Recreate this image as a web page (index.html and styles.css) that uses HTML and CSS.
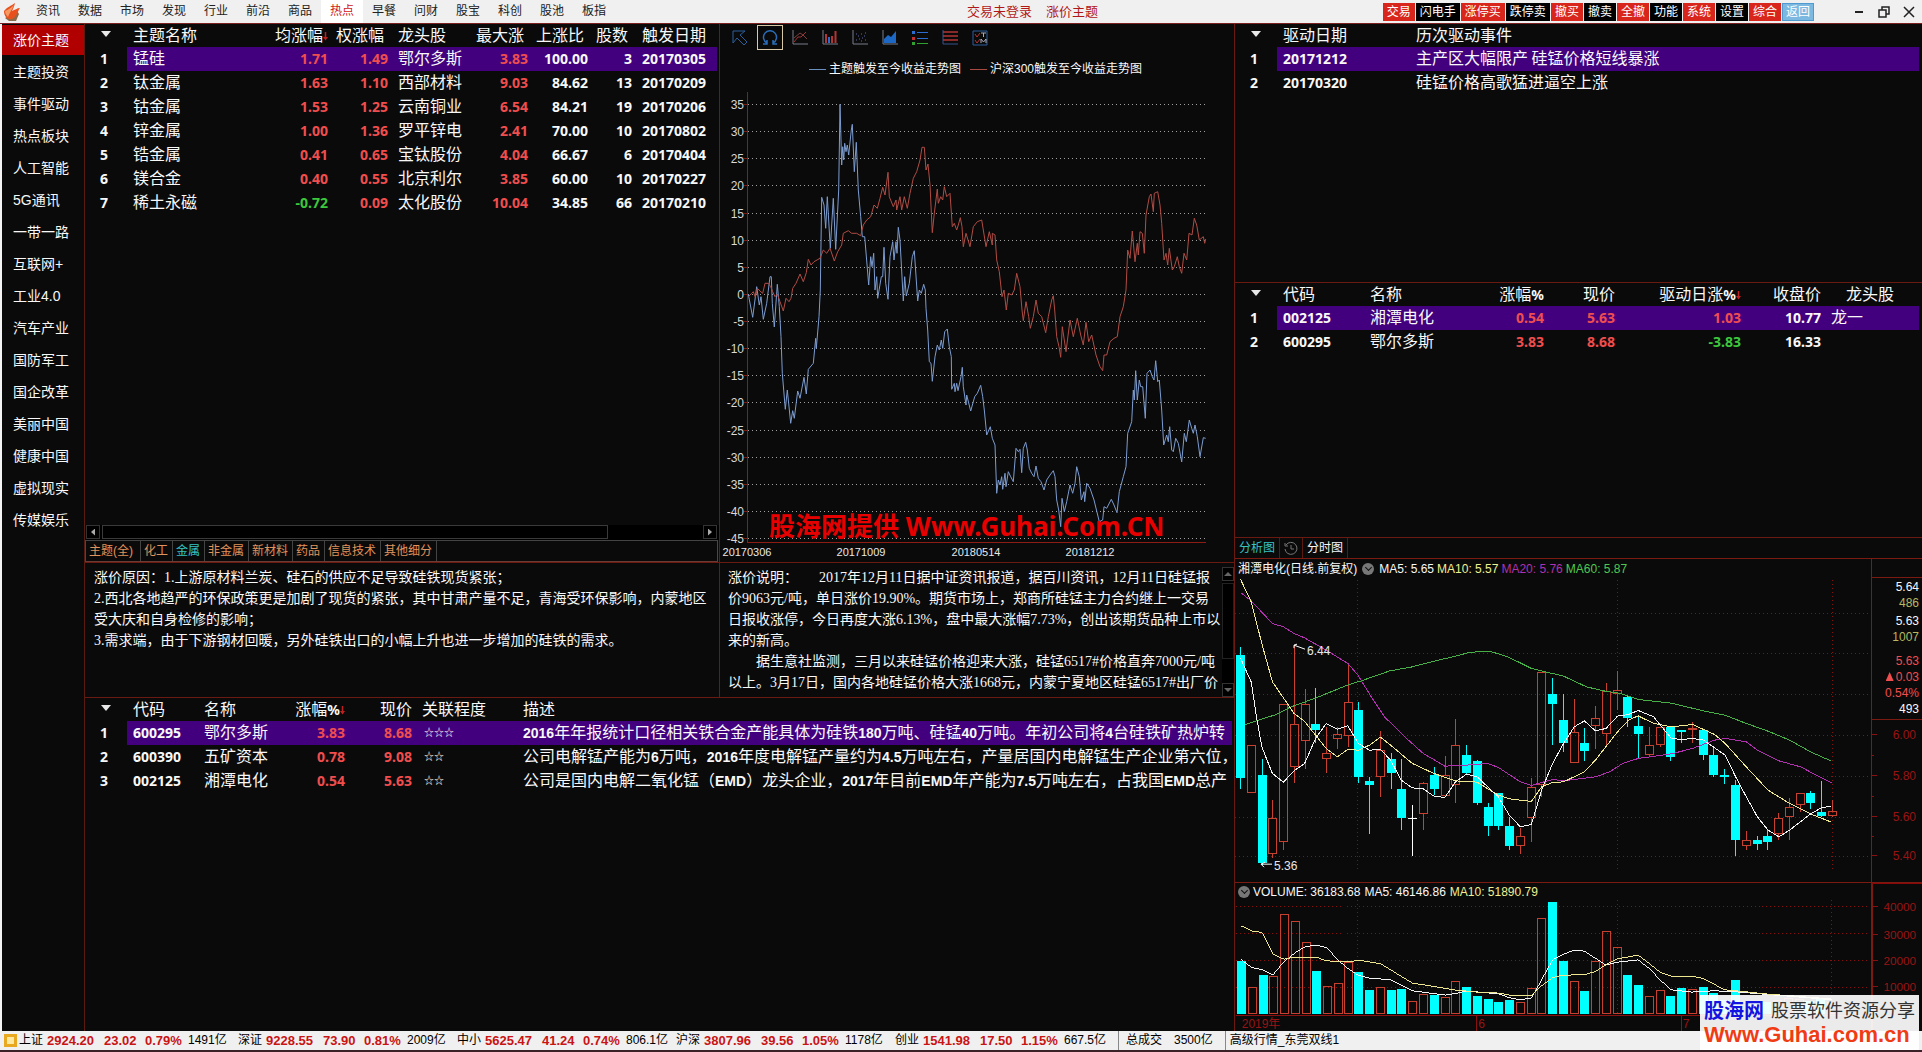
FILE: index.html
```
<!DOCTYPE html>
<html lang="zh-CN">
<head>
<meta charset="utf-8">
<title>涨价主题</title>
<link rel="stylesheet" href="styles.css">
</head>
<body>
<header class="topbar">
  <svg class="logo" viewBox="0 0 18 20" aria-hidden="true">
    <path d="M2 16L6 19H13L16 12L14 9Z" fill="#8a6a48"/>
    <path d="M1 9C4 5 8 4 12 1C11 5 10 7 9 9C12 8 14 6 17 6C14 10 14 15 9 17C4 18 1 14 1 9Z" fill="#e8501e"/>
    <path d="M2 9C5 8 8 6 11 3C9 8 6 11 5 15C3 13 2 11 2 9Z" fill="#f79a62"/>
  </svg>
  <nav class="menu">
    <a href="#">资讯</a><a href="#">数据</a><a href="#">市场</a><a href="#">发现</a><a href="#">行业</a><a href="#">前沿</a><a href="#">商品</a><a href="#" class="current">热点</a><a href="#">早餐</a><a href="#">问财</a><a href="#">股宝</a><a href="#">科创</a><a href="#">股池</a><a href="#">板指</a>
  </nav>
  <div class="session"><span>交易未登录</span><span>涨价主题</span></div>
  <div class="actions">
    <button class="red">交易</button><button>闪电手</button><button class="red">涨停买</button><button>跌停卖</button><button class="red">撤买</button><button>撤卖</button><button class="red">全撤</button><button>功能</button><button class="red">系统</button><button>设置</button><button class="red">综合</button><button class="back">返回</button>
  </div>
  <div class="window-controls">
    <button aria-label="最小化"><svg viewBox="0 0 12 12"><path d="M2 6H10" stroke-width="2"/></svg></button>
    <button aria-label="还原"><svg viewBox="0 0 12 12"><path d="M4 4V1H11V8H8M1 4H8V11H1Z" stroke-width="1.5"/></svg></button>
    <button aria-label="关闭"><svg viewBox="0 0 12 12"><path d="M1 1L11 11M11 1L1 11" stroke-width="1.5"/></svg></button>
  </div>
</header>

<main class="workspace">
  <nav class="sidebar">
    <a href="#" class="current">涨价主题</a><a href="#">主题投资</a><a href="#">事件驱动</a><a href="#">热点板块</a><a href="#">人工智能</a><a href="#">5G通讯</a><a href="#">一带一路</a><a href="#">互联网+</a><a href="#">工业4.0</a><a href="#">汽车产业</a><a href="#">国防军工</a><a href="#">国企改革</a><a href="#">美丽中国</a><a href="#">健康中国</a><a href="#">虚拟现实</a><a href="#">传媒娱乐</a>
  </nav>

  <section class="panel themes">
    <div class="table-area">
      <table class="grid-table">
        <colgroup><col class="w42"><col><col class="w64"><col class="w60"><col class="w80"><col class="w60"><col class="w60"><col class="w44"><col class="w85"></colgroup>
        <thead><tr><th><i class="sort"></i></th><th class="l">主题名称</th><th>均涨幅<i class="down"></i></th><th class="pr">权涨幅</th><th class="l pl">龙头股</th><th class="pr">最大涨</th><th class="pr">上涨比</th><th class="pr">股数</th><th class="l pl">触发日期</th></tr></thead>
        <tbody>
          <tr class="selected"><td>1</td><td class="l">锰硅</td><td class="up">1.71</td><td class="up">1.49</td><td class="l pl">鄂尔多斯</td><td class="up">3.83</td><td>100.00</td><td>3</td><td class="l pl">20170305</td></tr>
          <tr><td>2</td><td class="l">钛金属</td><td class="up">1.63</td><td class="up">1.10</td><td class="l pl">西部材料</td><td class="up">9.03</td><td>84.62</td><td>13</td><td class="l pl">20170209</td></tr>
          <tr><td>3</td><td class="l">钴金属</td><td class="up">1.53</td><td class="up">1.25</td><td class="l pl">云南铜业</td><td class="up">6.54</td><td>84.21</td><td>19</td><td class="l pl">20170206</td></tr>
          <tr><td>4</td><td class="l">锌金属</td><td class="up">1.00</td><td class="up">1.36</td><td class="l pl">罗平锌电</td><td class="up">2.41</td><td>70.00</td><td>10</td><td class="l pl">20170802</td></tr>
          <tr><td>5</td><td class="l">锆金属</td><td class="up">0.41</td><td class="up">0.65</td><td class="l pl">宝钛股份</td><td class="up">4.04</td><td>66.67</td><td>6</td><td class="l pl">20170404</td></tr>
          <tr><td>6</td><td class="l">镁合金</td><td class="up">0.40</td><td class="up">0.55</td><td class="l pl">北京利尔</td><td class="up">3.85</td><td>60.00</td><td>10</td><td class="l pl">20170227</td></tr>
          <tr><td>7</td><td class="l">稀土永磁</td><td class="dn">-0.72</td><td class="up">0.09</td><td class="l pl">太化股份</td><td class="up">10.04</td><td>34.85</td><td>66</td><td class="l pl">20170210</td></tr>
        </tbody>
      </table>
    </div>
    <div class="hscroll"><button class="arrow left" aria-label="向左"></button><div class="htrack"><div class="hthumb"></div></div><button class="arrow right" aria-label="向右"></button></div>
    <nav class="tabs"><a href="#">主题(全)</a><a href="#">化工</a><a href="#" class="current">金属</a><a href="#">非金属</a><a href="#">新材料</a><a href="#">药品</a><a href="#">信息技术</a><a href="#">其他细分</a></nav>
  </section>

  <section class="panel trend">
    <div class="chart-tools">
      <button aria-label="指针"><svg viewBox="0 0 16 16"><path d="M1 1H13L8 5L15 12L12 15L5 8L1 13Z" stroke="#2c5f9c"/></svg></button>
      <button class="current" aria-label="刷新"><svg viewBox="0 0 16 16"><path d="M5 13A6.500 6.500 0 1 1 11 13M1 14H5V10M15 14H11V10" stroke="#2a6cb8" stroke-width="1.500"/></svg></button>
      <button aria-label="折线图"><svg viewBox="0 0 16 16"><path d="M1 0V14H16" stroke="#777c88"/><path d="M2 12L6 7H9L14 2" stroke="#a03434"/><path d="M2 8L8 3L11 5L15 9" stroke="#7a4040"/></svg></button>
      <button aria-label="柱状图"><svg viewBox="0 0 16 16"><path d="M1 0V14H16" stroke="#777c88"/><path d="M4 4V13M10 6V13" stroke="#b23434" stroke-width="2"/><path d="M7 7V13" stroke="#2a6cd0" stroke-width="2"/><path d="M13.500 1V13" stroke="#b23434" stroke-width="2"/></svg></button>
      <button aria-label="散点图"><svg viewBox="0 0 16 16"><path d="M1 0V14H16" stroke="#777c88"/><path d="M4 10h1M6 6h1M7 9h1M9 4h1M10 8h1M12 6h1M13 10h1M9 11h1M4 4h1M13 3h1" stroke="#5a68a8"/></svg></button>
      <button aria-label="面积图"><svg viewBox="0 0 16 16"><path d="M2 13V9L6 5L9 7L14 1V13Z" fill="#1c68c4"/><path d="M1 0V14H16" stroke="#777c88"/></svg></button>
      <button aria-label="图例"><svg viewBox="0 0 16 16"><path d="M0 2.500H3" stroke="#2a6cd0" stroke-width="3"/><path d="M5 2.500H16" stroke="#2a6cd0"/><path d="M0 8.500H3" stroke="#c03030" stroke-width="3"/><path d="M5 8.500H16" stroke="#2a6cd0"/><path d="M0 13.500H3" stroke="#30a030" stroke-width="3"/><path d="M5 13.500H16" stroke="#30a030"/></svg></button>
      <button aria-label="网格线"><svg viewBox="0 0 16 16"><path d="M1 0V14H16" stroke="#35558c"/><path d="M1 2H16M1 6H16M1 10H16" stroke="#b23434" stroke-width="1.500"/></svg></button>
      <button aria-label="标题设置"><svg viewBox="0 0 16 16"><path d="M1 1H15V15H1Z" stroke="#2c5f9c"/><path d="M3 4L5 7L8 3M3 10L5 13L8 9" stroke="#b23434"/><path d="M9 3H14M11.500 3V7M9 13V9L11.500 12L14 9V13" stroke="#aab"/></svg></button>
    </div>
    <div class="legend"><span class="key theme"></span><span>主题触发至今收益走势图</span><span class="key index"></span><span>沪深300触发至今收益走势图</span></div>
    <svg class="plot" id="trend" viewBox="0 0 514 484"></svg>
  </section>

  <section class="panel reason">
    <p>涨价原因：1.上游原材料兰炭、硅石的供应不足导致硅铁现货紧张；<br>2.西北各地趋严的环保政策更是加剧了现货的紧张，其中甘肃产量不足，青海受环保影响，内蒙地区<br>受大庆和自身检修的影响；<br>3.需求端，由于下游钢材回暖，另外硅铁出口的小幅上升也进一步增加的硅铁的需求。</p>
  </section>

  <section class="panel notes">
    <p>涨价说明：　　2017年12月11日据中证资讯报道，据百川资讯，12月11日硅锰报<br>价9063元/吨，单日涨价19.90%。期货市场上，郑商所硅锰主力合约继上一交易<br>日报收涨停，今日再度大涨6.13%，盘中最大涨幅7.73%，创出该期货品种上市以<br>来的新高。<br>　　据生意社监测，三月以来硅锰价格迎来大涨，硅锰6517#价格直奔7000元/吨<br>以上。3月17日，国内各地硅锰价格大涨1668元，内蒙宁夏地区硅锰6517#出厂价</p>
    <div class="vscroll"><button class="arrow upward" aria-label="向上"></button><div class="vtrack"><div class="vthumb"></div></div><button class="arrow downward" aria-label="向下"></button></div>
  </section>

  <section class="panel stocks">
    <table class="grid-table">
      <colgroup><col class="w42"><col class="w71"><col class="w80"><col class="w67"><col class="w67"><col class="w105"><col></colgroup>
      <thead><tr><th><i class="sort"></i></th><th class="l">代码</th><th class="l">名称</th><th>涨幅<b>%</b><i class="down"></i></th><th>现价</th><th class="l pl">关联程度</th><th class="l">描述</th></tr></thead>
      <tbody>
        <tr class="selected"><td>1</td><td class="l">600295</td><td class="l">鄂尔多斯</td><td class="up">3.83</td><td class="up">8.68</td><td class="l pl stars">☆☆☆</td><td class="l desc">2016年年报统计口径相关铁合金产能具体为硅铁180万吨、硅锰40万吨。年初公司将4台硅铁矿热炉转</td></tr>
        <tr><td>2</td><td class="l">600390</td><td class="l">五矿资本</td><td class="up">0.78</td><td class="up">9.08</td><td class="l pl stars">☆☆</td><td class="l desc">公司电解锰产能为6万吨，2016年度电解锰产量约为4.5万吨左右，产量居国内电解锰生产企业第六位，</td></tr>
        <tr><td>3</td><td class="l">002125</td><td class="l">湘潭电化</td><td class="up">0.54</td><td class="up">5.63</td><td class="l pl stars">☆☆</td><td class="l desc">公司是国内电解二氧化锰（EMD）龙头企业，2017年目前EMD年产能为7.5万吨左右，占我国EMD总产</td></tr>
      </tbody>
    </table>
  </section>

  <div class="rightside">
    <section class="events">
      <table class="grid-table">
        <colgroup><col class="w42"><col class="w133"><col></colgroup>
        <thead><tr><th><i class="sort"></i></th><th class="l">驱动日期</th><th class="l">历次驱动事件</th></tr></thead>
        <tbody>
          <tr class="selected"><td>1</td><td class="l">20171212</td><td class="l">主产区大幅限产 硅锰价格短线暴涨</td></tr>
          <tr><td>2</td><td class="l">20170320</td><td class="l">硅锰价格高歌猛进逼空上涨</td></tr>
        </tbody>
      </table>
    </section>
    <section class="drivers">
      <table class="grid-table">
        <colgroup><col class="w42"><col class="w87"><col><col class="w80"><col class="w71"><col class="w126"><col class="w80"><col class="w98"></colgroup>
        <thead><tr><th><i class="sort"></i></th><th class="l">代码</th><th class="l">名称</th><th>涨幅<b>%</b></th><th>现价</th><th>驱动日涨<b>%</b><i class="down"></i></th><th>收盘价</th><th class="c">龙头股</th></tr></thead>
        <tbody>
          <tr class="selected"><td>1</td><td class="l">002125</td><td class="l">湘潭电化</td><td class="up">0.54</td><td class="up">5.63</td><td class="up">1.03</td><td>10.77</td><td class="l pl">龙一</td></tr>
          <tr><td>2</td><td class="l">600295</td><td class="l">鄂尔多斯</td><td class="up">3.83</td><td class="up">8.68</td><td class="dn">-3.83</td><td>16.33</td><td></td></tr>
        </tbody>
      </table>
    </section>
    <section class="quote">
      <nav class="quote-tabs">
        <a href="#" class="current">分析图</a>
        <a href="#" class="clock" aria-label="历史"><svg viewBox="0 0 14 14"><path d="M2 4A6 6 0 1 1 1 8M1 2V5H4M7 4V8H10" fill="none" stroke="#777"/></svg></a>
        <a href="#">分时图</a>
      </nav>
      <div class="price-row">
        <div class="chart-body">
          <div class="info"><span class="name">湘潭电化(日线.前复权)</span><i class="chev"></i><span>MA5: 5.65</span><span class="ma10">MA10: 5.57</span><span class="ma20">MA20: 5.76</span><span class="ma60">MA60: 5.87</span></div>
          <svg class="plot" id="candles" viewBox="0 0 636 304"></svg>
        </div>
        <aside class="side">
          <div class="ticks">
            <div>5.64</div><div class="vol">486</div>
            <div class="gap2">5.63</div><div class="vol">1007</div>
            <div class="gap8 up">5.63</div><div class="up"><i class="tri"></i>0.03</div><div class="up">0.54%</div><div>493</div>
          </div>
          <svg class="plot" id="price-axis" viewBox="0 0 50 162"></svg>
        </aside>
      </div>
      <div class="volume-row">
        <div class="chart-body">
          <div class="info vol-info"><i class="chev"></i><span>VOLUME: 36183.68</span><span>MA5: 46146.86</span><span class="ma10">MA10: 51890.79</span></div>
          <svg class="plot" id="volume" viewBox="0 0 636 131"></svg>
        </div>
        <aside class="side strong"><svg class="plot" id="volume-axis" viewBox="0 0 50 148"></svg></aside>
      </div>
    </section>
  </div>
</main>

<footer class="statusbar">
  <i class="app-icon"></i>
  <div class="index"><span>上证</span><b>2924.20</b><b>23.02</b><b>0.79%</b><span>1491亿</span></div>
  <div class="index"><span>深证</span><b>9228.55</b><b>73.90</b><b>0.81%</b><span>2009亿</span></div>
  <div class="index"><span>中小</span><b>5625.47</b><b>41.24</b><b>0.74%</b><span>806.1亿</span></div>
  <div class="index"><span>沪深</span><b>3807.96</b><b>39.56</b><b>1.05%</b><span>1178亿</span></div>
  <div class="index"><span>创业</span><b>1541.98</b><b>17.50</b><b>1.15%</b><span>667.5亿</span></div>
  <div class="total"><span>总成交</span><span>3500亿</span></div>
  <div class="server">高级行情_东莞双线1</div>
</footer>
<div class="site-mark"><span class="brand">股海网</span><span class="slogan">股票软件资源分享</span><span class="url">Www.Guhai.com.cn</span></div>
<script src="app.js"></script>
</body>
</html>
```
FILE: styles.css
```
* { box-sizing: border-box; }
html, body { margin: 0; }
body {
  min-height: 100vh;
  display: flex;
  flex-direction: column;
  position: relative;
  background: #0a0a0a;
  color: #f8f8f8;
  font: 14px/20px "Liberation Sans", "Noto Sans CJK SC", sans-serif;
  border-bottom: 2px solid #3a2228;
}
a { color: inherit; text-decoration: none; }
button { margin: 0; padding: 0; border: 0; background: none; color: inherit; font: inherit; }
p { margin: 0; }
i { font-style: normal; }

/* top bar */
.topbar {
  flex: none;
  height: 24px;
  display: flex;
  align-items: center;
  background: #f0f0f0;
  border-bottom: 1px solid #7a2020;
  color: #222;
  font-size: 12px;
  position: relative;
}
.logo { width: 18px; height: 20px; margin: 0 6px 0 3px; }
.menu { display: flex; align-self: stretch; }
.menu a { width: 42px; text-align: center; line-height: 23px; }
.menu .current { background: #fff; color: #d01818; }
.session {
  position: absolute;
  left: 50%;
  margin-left: 6px;
  display: flex;
  gap: 14px;
  color: #b01818;
  font-size: 13px;
}
.actions { margin-left: auto; display: flex; gap: 1px; }
.actions button {
  height: 18px;
  padding: 0 4px;
  background: #000;
  color: #fff;
  line-height: 18px;
}
.actions .red { background: #d9261c; }
.actions .back { background: #7db8e0; box-shadow: inset 0 0 0 1px #4f9bd0; }
.window-controls { display: flex; gap: 13px; margin: 0 7px 0 39px; }
.window-controls svg { display: block; width: 12px; height: 12px; fill: none; stroke: #222; }

/* workspace */
.workspace {
  flex: 1;
  display: grid;
  grid-template-columns: 83px minmax(0, 635fr) minmax(0, 515fr) minmax(0, 687fr);
  grid-template-rows: minmax(0, 539fr) minmax(0, 135fr) minmax(0, 333fr);
  border-left: 2px solid #f4f4f4;
}
.sidebar {
  grid-row: 1 / 4;
  display: flex;
  flex-direction: column;
  gap: 2px;
  padding-top: 1px;
  border-right: 1px solid #5a1a10;
}
.sidebar a { height: 30px; padding-left: 11px; line-height: 30px; }
.sidebar .current { background: #b00000; }
.panel { border-right: 1px solid #6a1a10; border-bottom: 1px solid #6a1a10; }
.themes { display: flex; flex-direction: column; }
.table-area { flex: 1; }

/* data tables */
.grid-table {
  width: calc(100% - 2px);
  table-layout: fixed;
  border-collapse: collapse;
  font: 16px/19px "Noto Sans CJK SC", sans-serif;
}
.grid-table tr { height: 24px; }
.grid-table thead tr { height: 23px; }
.grid-table th, .grid-table td {
  height: inherit;
  padding: 0 0 3px;
  font-weight: normal;
  text-align: right;
  vertical-align: middle;
  white-space: nowrap;
}
.grid-table th b { font: bold 14px/14px "Noto Sans", sans-serif; }
.grid-table td:first-child { text-align: center; padding-right: 4px; }
.grid-table .l { text-align: left; padding-left: 6px; }
.grid-table .pl { padding-left: 10px; }
.grid-table .pr { padding-right: 4px; }
.grid-table .c { text-align: center; }
.grid-table .selected td:not(:first-child) { background: #42007e; }
.grid-table .stars { font-size: 10px; padding-left: 12px; }
.num { font: bold 14px/14px "Noto Sans", sans-serif; }
.desc .num { font-family: "Liberation Sans", sans-serif; }
.up { color: #f04e4e; }
.dn { color: #3cc83c; }
.w42 { width: 42px; } .w44 { width: 44px; } .w60 { width: 60px; } .w64 { width: 64px; }
.w67 { width: 67px; } .w71 { width: 71px; } .w80 { width: 80px; } .w85 { width: 85px; }
.w87 { width: 87px; } .w98 { width: 98px; } .w105 { width: 105px; } .w126 { width: 126px; } .w133 { width: 133px; }
.sort {
  display: block;
  width: 10px;
  height: 6px;
  margin: 0 auto;
  background: #e8e8e8;
  clip-path: polygon(0 0, 100% 0, 50% 100%);
}
.down {
  display: inline-block;
  width: 5px;
  height: 9px;
  background: #c02020;
  clip-path: polygon(35% 0, 65% 0, 65% 60%, 100% 60%, 50% 100%, 0 60%, 35% 60%);
}

/* scroll bars */
.hscroll { display: flex; gap: 2px; height: 15px; padding: 0 2px 0 1px; background: #000; }
.vscroll { display: flex; flex-direction: column; gap: 2px; width: 12px; background: #000; }
.arrow { flex: none; width: 14px; height: 14px; border: 1px solid #333; display: grid; place-items: center; }
.vscroll .arrow { width: 12px; }
.arrow::after { content: ""; width: 4px; height: 7px; background: #aaa; }
.left::after { clip-path: polygon(100% 0, 100% 100%, 0 50%); }
.right::after { clip-path: polygon(0 0, 100% 50%, 0 100%); }
.upward::after, .downward::after { width: 8px; height: 4px; background: #666; }
.upward::after { clip-path: polygon(50% 0, 100% 100%, 0 100%); }
.downward::after { clip-path: polygon(0 0, 100% 0, 50% 100%); }
.htrack, .vtrack { flex: 1; }
.hthumb { width: 84.5%; height: 14px; border: 1px solid #3a3a3a; }
.vthumb { height: 76px; border: 1px solid #222; }

/* theme tabs */
.tabs {
  display: flex;
  height: 22px;
  margin-right: 1px;
  border: 1px solid #6a3a34;
  border-top-color: #444;
  color: #e0935c;
  font-size: 12px;
  line-height: 20px;
}
.tabs a { padding: 0 4px 0 3px; border-right: 1px solid #444; }
.tabs a:first-child { width: 55px; }
.tabs .current { color: #35c4c4; }

/* yield comparison chart */
.trend { display: flex; flex-direction: column; }
.chart-tools { display: flex; gap: 4px; height: 27px; padding: 1px 0 0 7px; }
.chart-tools button { width: 26px; height: 25px; display: grid; place-items: center; }
.chart-tools .current { border: 1px solid #d8c8a8; }
.chart-tools svg { width: 16px; height: 16px; fill: none; }
.legend {
  display: flex;
  align-items: center;
  height: 27px;
  padding: 9px 0 0 89px;
  font-size: 12px;
}
.key { width: 17px; height: 1px; margin-right: 3px; background: #6a90c0; }
.key.index { margin-left: 9px; background: #a84a40; }
.plot { flex: 1; min-height: 0; width: 100%; display: block; }
svg text { font-size: 12px; }
svg .mark { font: bold 26px "Noto Sans", "Noto Sans CJK SC", sans-serif; fill: #e80000; }

/* text panels */
.reason, .notes { font: 14px/21px "Liberation Serif", "Noto Sans CJK SC", serif; white-space: nowrap; }
.reason { padding: 4px 0 0 9px; }
.notes { display: flex; justify-content: space-between; padding: 4px 0 0 8px; }
.notes p { min-width: 0; }
.stocks { grid-column: 2 / 4; border-bottom: 0; }

/* right side */
.rightside {
  grid-column: 4;
  grid-row: 1 / 4;
  display: grid;
  grid-template-rows: minmax(0, 259fr) minmax(0, 255fr) minmax(0, 493fr);
}
.events, .drivers { border-bottom: 1px solid #6a1a10; }
.events .grid-table, .drivers .grid-table { width: calc(100% - 3px); }
.quote { display: flex; flex-direction: column; font-size: 12px; line-height: 16px; }
.quote-tabs { display: flex; height: 21px; border-bottom: 1px solid #7a1a10; line-height: 20px; }
.quote-tabs a { padding: 0 4px; border-right: 1px solid #5a1a10; }
.quote-tabs .current { color: #35c4c4; }
.clock { display: grid; place-items: center; }
.clock svg { width: 14px; height: 14px; }
.price-row, .volume-row { display: grid; grid-template-columns: minmax(0, 1fr) 51px; min-height: 0; }
.price-row { flex: 324; border-bottom: 1px solid #7a1a10; }
.volume-row { flex: 148; }
.chart-body, .side { display: flex; flex-direction: column; min-height: 0; }
.side { border-left: 1px solid #7a1a10; }
.side.strong { border-left-width: 2px; border-top: 1px solid #8c0808; }
.info { display: flex; align-items: center; gap: 3px; height: 19px; padding-left: 3px; white-space: nowrap; }
.vol-info { height: 17px; gap: 4px; }
.chev { width: 12px; height: 12px; margin: 0 2px; border-radius: 50%; background: #777; display: grid; place-items: center; }
.vol-info .chev { margin: 0 -1px 0 0; }
.chev::after { content: ""; width: 4px; height: 4px; margin-top: -2px; border: solid #111; border-width: 0 1px 1px 0; transform: rotate(45deg); }
.ma10 { color: #f0f090; }
.ma20 { color: #b030b0; }
.ma60 { color: #50c850; }
.ticks {
  flex: none;
  margin-top: 18px;
  padding: 1px 3px 2px 0;
  border-top: 1px solid #7a1a10;
  border-bottom: 1px solid #7a1a10;
  text-align: right;
}
.vol { color: #b8b860; }
.gap2 { margin-top: 2px; }
.gap8 { margin-top: 8px; }
.tri { display: inline-block; width: 8px; height: 9px; margin-right: 2px; background: #f04e4e; clip-path: polygon(50% 0, 100% 100%, 0 100%); }

/* status bar */
.statusbar {
  flex: none;
  display: flex;
  align-items: center;
  height: 19px;
  padding-left: 4px;
  background: #f0f0f0;
  color: #000;
  font-size: 12px;
  line-height: 19px;
  white-space: nowrap;
}
.app-icon { width: 13px; height: 13px; margin-right: 2px; background: #ffe9a0; border: 3px solid #e8a820; }
.index { display: grid; grid-template-columns: 28px 57px 41px 43px 51px; }
.index:nth-of-type(n) { grid-template-columns: 28px 57px 41px 43px 50px; }
.index b { color: #c81414; font-size: 13px; }
.total { display: flex; gap: 12px; margin-left: 4px; padding: 0 12px 0 7px; border-left: 1px solid #888; }
.server { padding-left: 4px; border-left: 1px solid #888; }

/* site mark, floats over the page corner */
.site-mark {
  position: absolute;
  right: 3px;
  bottom: -2px;
  width: 219px;
  height: 57px;
  padding: 3px 4px 2px;
  display: grid;
  grid-template-columns: 63px 1fr;
  grid-template-rows: 26px 24px;
  background: rgba(255, 255, 255, 0.92);
  white-space: nowrap;
  line-height: 26px;
}
.brand { color: #1414e0; font-weight: bold; font-size: 20px; }
.slogan { padding-left: 4px; color: #333; font-size: 18px; }
.url { grid-column: 1 / 3; color: #f03c14; font-weight: bold; font-size: 22px; line-height: 22px; }
```
FILE: app.js
```
(function () {
  var NS = 'http://www.w3.org/2000/svg';

  function add(svg, name, attrs, text) {
    var el = document.createElementNS(NS, name);
    for (var k in attrs) el.setAttribute(k, attrs[k]);
    if (text) el.textContent = text;
    svg.appendChild(el);
    return el;
  }
  function line(svg, x1, y1, x2, y2, color, dash) {
    var a = { x1: x1, y1: y1, x2: x2, y2: y2, stroke: color, 'shape-rendering': 'crispEdges' };
    if (dash) a['stroke-dasharray'] = dash;
    add(svg, 'line', a);
  }
  function curve(svg, data, fx, fy, color, crisp) {
    var pts = data.split(' ').map(function (p) {
      var v = p.split(',');
      return fx(+v[0]).toFixed(1) + ',' + fy(+v[1]).toFixed(1);
    });
    var a = { points: pts.join(' '), fill: 'none', stroke: color };
    if (crisp) a['shape-rendering'] = 'crispEdges';
    add(svg, 'polyline', a);
  }
  function label(svg, x, y, text, color, anchor) {
    add(svg, 'text', { x: x, y: y, fill: color, 'text-anchor': anchor || 'start' }, text);
  }

  /* bold numerals inside table cells */
  document.querySelectorAll('.grid-table td').forEach(function (td) {
    td.innerHTML = td.textContent.replace(/[-0-9.A-Z]+/g, '<span class="num">$&</span>');
  });

  /* theme vs. CSI 300 yield */
  var t = document.getElementById('trend');
  for (var i = 0; i <= 16; i++) {
    var gy = Math.round(26 + i * 27.125) + 0.5;
    line(t, 28, gy, 486, gy, '#a0a0a0', '1 3');
    line(t, 24, gy, 28, gy, '#7a1a10');
    label(t, 24, gy + 4, String(35 - i * 5), '#d8d8d8', 'end');
  }
  line(t, 27.5, 14, 27.5, 464, '#8c1c14');
  line(t, 27, 464.5, 486, 464.5, '#8c1c14');
  [['20170306', 27], ['20171009', 141], ['20180514', 256], ['20181212', 370]].forEach(function (d) {
    add(t, 'text', { x: d[1], y: 478, fill: '#e8e8e8', 'text-anchor': 'middle', style: 'font-size:11px' }, d[0]);
  });
  var tx = function (v) { return 20 + v / 3; };
  var ty = function (v) { return 12 + v / 3; };
  curve(t, '25,613 38,682 50,590 58,645 63,620 70,688 80,640 90,560 94,560 97,640 103,711 112,583 118,650 123,740 127,850 136,958 142,900 152,1000 158,962 163,985 173,903 180,925 192,862 199,912 205,838 220,820 227,745 229,775 237,680 241,600 245,322 252,345 257,415 262,320 271,475 280,325 287,478 296,300 300,43 305,225 308,170 311,210 314,160 318,185 322,165 326,195 334,120 337,103 343,245 349,157 355,300 362,380 367,440 374,440 386,585 392,500 396,530 401,490 405,600 410,560 413,625 424,560 428,560 432,472 437,580 444,628 450,500 458,455 462,510 468,455 471,490 475,412 480,450 490,633 494,560 499,618 508,580 517,500 523,482 533,633 538,600 544,610 551,583 556,600 558,655 563,720 568,815 573,820 577,874 585,800 592,765 598,780 604,750 608,775 614,725 622,717 628,770 634,800 635,898 643,880 645,905 650,880 654,902 663,860 667,832 670,890 678,945 680,915 692,963 704,920 712,910 722,886 728,920 733,960 740,1035 751,1010 757,1045 765,1065 770,1210 775,1170 780,1185 785,1160 788,1198 795,1150 798,1190 805,1145 812,1160 820,1175 828,1075 835,1085 840,1078 845,1148 850,1075 857,1057 862,1080 868,1135 875,1150 882,1160 888,1128 895,1165 903,1175 912,1200 920,1170 930,1155 940,1142 945,1160 950,1230 956,1260 962,1310 966,1225 973,1265 980,1235 990,1185 998,1210 1005,1180 1010,1130 1018,1160 1024,1230 1032,1205 1034,1235 1040,1180 1050,1195 1062,1230 1078,1295 1088,1290 1092,1250 1100,1255 1114,1228 1122,1245 1131,1268 1138,1205 1150,1160 1158,1130 1163,1030 1175,995 1180,900 1183,930 1187,842 1192,930 1198,870 1202,890 1208,890 1216,985 1221,850 1230,840 1237,860 1242,870 1247,812 1253,875 1258,870 1265,960 1271,1065 1280,1035 1285,1055 1289,1010 1295,1080 1300,1085 1307,1045 1315,1060 1325,1116 1333,1030 1339,1055 1348,990 1355,1015 1360,1030 1365,1005 1372,1040 1380,1100 1390,1043 1397,1045', tx, ty, '#7c9cd0');
  curve(t, '25,620 35,610 40,605 46,622 52,595 60,603 68,610 75,580 85,580 92,590 98,605 105,620 112,612 120,635 130,663 138,625 147,635 153,625 158,595 168,580 180,552 190,575 199,548 205,508 213,525 222,515 240,505 250,480 260,490 270,475 283,513 293,485 305,465 310,430 325,422 335,430 350,430 362,437 370,405 380,390 392,380 402,345 412,355 420,325 428,292 435,315 444,247 448,320 460,350 468,330 470,360 480,320 485,360 493,320 502,355 510,310 520,265 530,245 540,210 546,172 553,172 558,240 564,222 570,285 577,428 583,370 592,297 595,340 602,320 608,330 613,290 620,320 630,310 637,410 643,400 650,420 655,405 661,383 666,410 670,470 678,430 690,470 700,410 712,395 725,390 738,470 748,425 757,465 757,430 765,435 770,510 778,545 786,620 792,600 799,660 805,610 815,615 823,600 830,550 840,590 846,660 850,692 858,635 866,680 871,715 880,680 888,630 895,670 905,680 917,728 925,680 935,630 940,617 944,660 950,740 957,770 962,802 967,710 978,785 990,690 1000,740 1012,685 1022,735 1030,765 1038,697 1046,755 1055,735 1068,795 1080,830 1088,842 1092,795 1100,795 1110,755 1122,745 1132,740 1140,680 1150,650 1158,600 1163,480 1170,505 1177,423 1185,515 1192,460 1195,495 1200,425 1207,430 1213,490 1218,375 1228,320 1233,312 1240,365 1243,310 1253,305 1260,345 1265,400 1272,510 1278,490 1283,525 1288,475 1297,540 1303,530 1312,500 1318,530 1325,550 1332,490 1340,510 1347,430 1356,435 1363,385 1370,405 1378,450 1390,440 1394,460 1397,447', tx, ty, '#b04c44');
  add(t, 'text', { x: 49, y: 458, 'class': 'mark' }, '股海网提供 Www.Guhai.Com.CN');

  /* daily candles: kind, body top, body bottom, high, low */
  var RED = '#c8402f', CYAN = '#00ffff', GRID = '#8a100c';
  var bars = 'C,375,745,351,777 R,646,790,646,790 C,735,1000,687,1005 R,865,973,811,985 R,523,937,523,960 R,583,712,345,758 R,523,634,477,717 C,582,599,474,640 R,670,688,592,729 R,613,626,592,657 R,517,619,400,650 C,540,740,516,758 C,754,765,741,911 R,660,742,603,800 C,687,728,670,777 C,777,863,687,900 W,865,865,825,978 R,760,853,755,900 C,735,776,711,795 R,735,797,678,800 R,646,766,567,818 C,675,728,646,735 C,693,818,690,825 C,831,887,820,917 C,790,887,788,900 C,888,947,860,960 R,919,949,895,971 R,772,865,744,935 R,427,766,427,800 C,492,521,445,645 C,570,638,492,665 R,607,700,507,700 C,640,662,595,692 R,565,589,527,657 R,482,612,460,645 R,481,492,422,540 C,502,563,497,590 C,588,612,562,685 R,646,675,590,680 R,590,646,590,650 C,590,680,588,692 C,600,605,600,640 R,595,601,575,638 C,600,674,597,690 C,675,735,655,740 C,736,740,718,763 C,765,930,750,978 R,930,949,903,960 C,930,941,918,960 C,918,935,900,960 R,865,912,850,930 R,832,860,805,930 R,790,826,788,845 C,789,818,783,838 C,846,858,754,860 R,842,859,810,862'.split(' ');
  var c = document.getElementById('candles');
  var cx = function (v) { return v / 2.266 - 5; };
  var cy = function (v) { return v / 3 - 48; };
  function gridV(svg, top, bottom) {
    [290, 878, 1365].forEach(function (v) {
      var x = Math.floor(cx(v)) + 0.5;
      line(svg, x, top, x, bottom, GRID, '1 3');
    });
  }
  [250, 370, 492, 614, 737, 860, 979].forEach(function (v) {
    var y = Math.round(cy(v)) + 0.5;
    line(c, 0, y, 636, y, GRID, '1 3');
  });
  gridV(c, 2, 294);
  bars.forEach(function (b, n) {
    var d = b.split(','), x = Math.floor(cx(24 + n * 24.38));
    var top = Math.round(cy(+d[1])), bot = Math.round(cy(+d[2]));
    var hi = Math.round(cy(+d[3])), lo = Math.round(cy(+d[4]));
    if (d[0] === 'C') {
      line(c, x + 0.5, hi, x + 0.5, lo, CYAN);
      add(c, 'rect', { x: x - 4, y: top, width: 9, height: Math.max(1, bot - top), fill: CYAN, 'shape-rendering': 'crispEdges' });
    } else if (d[0] === 'W') {
      line(c, x + 0.5, hi, x + 0.5, lo, '#fff');
      line(c, x - 4, top + 0.5, x + 5, top + 0.5, '#fff');
    } else {
      line(c, x + 0.5, hi, x + 0.5, top, RED);
      line(c, x + 0.5, bot, x + 0.5, lo, RED);
      add(c, 'rect', { x: x - 3.5, y: top + 0.5, width: 8, height: Math.max(1, bot - top - 1), fill: 'none', stroke: RED, 'shape-rendering': 'crispEdges' });
    }
  });
  curve(c, '35,583 105,553 135,532 195,503 266,465 300,451 362,422 410,411 460,394 511,378 545,366 590,364 630,380 683,415 756,438 808,470 850,483 885,490 925,508 1000,519 1073,542 1122,555 1170,580 1219,603 1268,630 1317,666 1363,693', cx, cy, '#46b046', true);
  curve(c, '24,187 48,212 96,280 121,290 145,310 169,323 218,360 267,400 290,435 320,500 350,560 400,625 438,670 487,708 536,705 584,700 608,712 658,755 683,766 731,748 756,752 828,740 860,725 890,700 925,685 1000,671 1048,655 1098,630 1122,625 1170,635 1195,660 1244,692 1293,710 1340,743 1363,758', cx, cy, '#b030b0', true);
  curve(c, '24,148 48,215 72,340 96,455 135,530 145,550 169,574 194,615 218,655 243,680 267,658 291,660 316,645 341,621 364,645 413,700 462,730 511,752 560,756 608,795 633,806 683,814 706,770 731,757 756,755 803,725 828,690 878,605 903,570 925,557 960,580 1000,590 1048,583 1098,613 1122,640 1170,710 1219,780 1268,820 1317,852 1363,876', cx, cy, '#f0e890', true);
  curve(c, '24,385 48,455 60,560 72,650 96,730 121,756 145,722 169,700 194,625 218,580 243,597 267,587 291,640 316,660 341,658 364,690 388,750 413,773 438,776 462,798 487,802 511,755 536,732 560,740 584,770 608,800 633,855 658,890 683,883 706,780 731,700 756,640 780,590 803,572 828,602 852,595 878,558 903,553 925,541 960,560 1000,625 1024,628 1048,625 1073,630 1122,675 1146,740 1170,800 1195,860 1219,900 1244,920 1268,900 1317,850 1342,832 1363,829', cx, cy, '#f4f4f4', true);
  add(c, 'path', { d: 'M70 71L59 67M62 66L59 67V70', fill: 'none', stroke: '#fff' });
  label(c, 72, 77, '6.44', '#e8e8e8');
  add(c, 'path', { d: 'M37 286H26M30 284L26 286L29 289', fill: 'none', stroke: '#fff' });
  label(c, 39, 292, '5.36', '#e8e8e8');

  var pa = document.getElementById('price-axis');
  [['6.00', 15], ['5.80', 56], ['5.60', 97], ['5.40', 136]].forEach(function (d) {
    line(pa, 0, d[1] - 0.5, 5, d[1] - 0.5, '#8c1010');
    label(pa, 44, d[1] + 4, d[0], '#981414', 'end');
  });
  [35, 76, 116].forEach(function (y) { line(pa, 0, y + 0.5, 2, y + 0.5, '#8c1010'); });

  /* volume: kind and bar top, all bars stand on the same base line */
  var vols = 'C302 R380 C345 R349 R163 R184 R247 C333 R379 R370 R306 C336 C390 R382 C390 C387 R424 R403 C405 R411 R364 C381 C408 C417 C426 C420 R427 R385 R175 C126 C303 R364 C393 R304 R214 R262 C345 C376 R409 R391 C408 C384 R388 C381 C399 C420 C360 R425 C430 C425 R420 R415 R418 C422 C415 R425'.split(' ');
  var v = document.getElementById('volume');
  var vy = function (n) { return n / 3 - 40; };
  [138, 220, 301, 381].forEach(function (n) {
    var y = Math.round(vy(n)) + 0.5;
    line(v, 0, y, 636, y, GRID, '1 3');
  });
  gridV(v, 0, 115);
  vols.forEach(function (s, n) {
    var x = Math.floor(cx(24 + n * 24.38)), top = Math.round(vy(+s.slice(1)));
    if (s[0] === 'C') add(v, 'rect', { x: x - 4, y: top, width: 9, height: 114 - top, fill: CYAN, 'shape-rendering': 'crispEdges' });
    else add(v, 'rect', { x: x - 3.5, y: top + 0.5, width: 8, height: 113 - top, fill: 'none', stroke: RED, 'shape-rendering': 'crispEdges' });
  });
  curve(v, '24,300 48,323 72,330 96,345 121,305 145,280 169,260 194,256 218,263 243,300 267,327 291,347 316,355 364,360 413,393 487,406 511,401 536,394 608,402 633,414 658,420 683,415 706,360 731,300 756,283 780,271 803,274 828,295 852,316 878,307 925,300 950,325 975,360 1000,390 1048,397 1098,393 1146,396 1219,404 1293,412 1365,420', cx, vy, '#f4f4f4', true);
  curve(v, '24,198 48,213 72,218 96,283 121,298 145,292 194,292 218,303 267,306 291,301 341,312 388,350 413,370 462,380 511,391 560,397 608,400 633,406 683,406 706,378 731,353 756,346 803,345 828,335 852,315 878,297 925,286 950,310 975,337 1000,349 1048,349 1073,356 1122,390 1170,396 1219,403 1293,410 1365,418', cx, vy, '#f0e890', true);
  line(v, 0, 115.5, 636, 115.5, '#8c1010');
  label(v, 6, 128, '2019年', '#981414');
  line(v, 241.5, 116, 241.5, 131, '#8c1010');
  label(v, 243, 128, '6', '#981414');
  line(v, 446.5, 116, 446.5, 131, '#8c1010');
  label(v, 448, 128, '7', '#981414');

  var va = document.getElementById('volume-axis');
  [['40000', 22], ['30000', 50], ['20000', 77], ['10000', 103]].forEach(function (d) {
    line(va, 0, d[1] + 0.5, 5, d[1] + 0.5, '#8c1010');
    label(va, 44, d[1] + 5, d[0], '#981414', 'end');
  });
})();
```
